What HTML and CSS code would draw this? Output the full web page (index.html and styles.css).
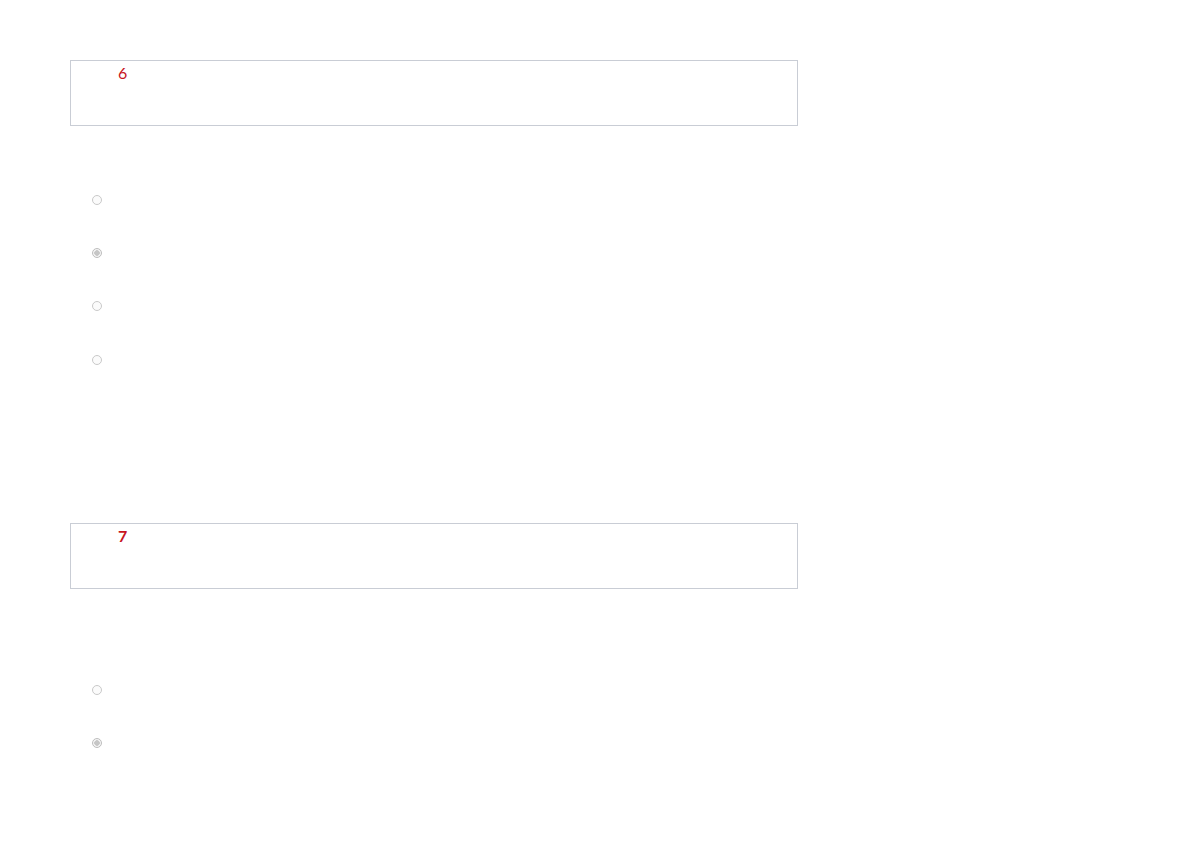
FILE: index.html
```html
<!doctype html>
<html lang="en">
<head>
    <meta charset="UTF-8">
    <meta name="viewport" content="width=device-width, initial-scale=1.0">
    <title>Quiz</title>
    <link rel="stylesheet" href="styles.css">
</head>
<body>
    <div class="quiz">
        <!-- Question 6 -->
        <div class="question q6">
            <div class="question-head">
                <span class="num">6</span>
            </div>
            <ul class="options">
                <li><input type="radio" name="q6" disabled></li>
                <li><input type="radio" name="q6" checked disabled></li>
                <li><input type="radio" name="q6" disabled></li>
                <li><input type="radio" name="q6" disabled></li>
            </ul>
        </div>

        <!-- Question 7 -->
        <div class="question q7">
            <div class="question-head">
                <span class="num bold">7</span>
            </div>
            <ul class="options">
                <li><input type="radio" name="q7" disabled></li>
                <li><input type="radio" name="q7" checked disabled></li>
            </ul>
        </div>
    </div>
</body>
</html>
```

FILE: styles.css
```css
body {
    margin: 0;
    background: #fff;
    font-family: Lato, "Noto Sans", sans-serif;
    color: #333;
}
.quiz {
    width: 728px;
    margin-left: 70px;
    padding-top: 60px;
}
.question-head {
    box-sizing: border-box;
    height: 66px;
    border: 1px solid #c9cdd5;
    padding: 2px 0 0 47px;
}
.num {
    font-size: 16px;
    line-height: 20px;
    color: #c8141e;
}
.num.bold {
    font-weight: bold;
}
.options {
    list-style: none;
    margin: 0;
    padding: 0;
}
.options li {
    height: 53.33px;
    display: flex;
    align-items: center;
    padding-left: 22px;
}
.q6 .options {
    margin-top: 47px;
}
.q7 {
    margin-top: 137px;
}
.q7 .options {
    margin-top: 74px;
}
input[type="radio"] {
    appearance: none;
    box-sizing: border-box;
    width: 10px;
    height: 10px;
    margin: 0;
    border: 1px solid #c9c9c9;
    border-radius: 50%;
    background: #fbfbfb;
}
input[type="radio"]:checked {
    background: radial-gradient(circle, #c6c6c6 0 2.5px, #f4f4f4 3px);
    border-color: #bdbdbd;
}
```
